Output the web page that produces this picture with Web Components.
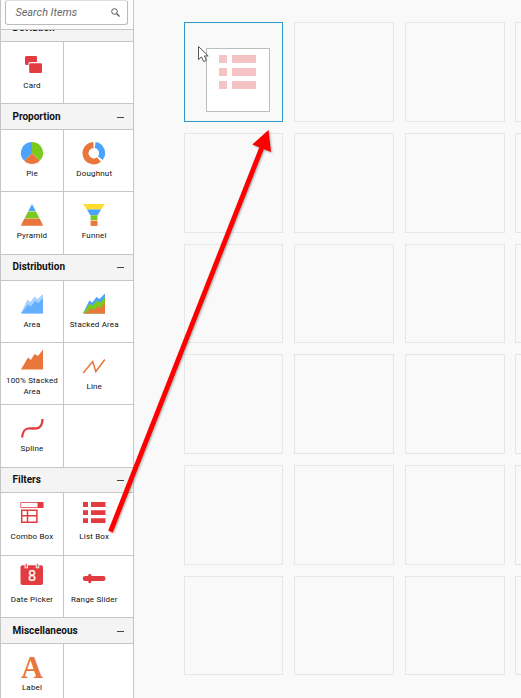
<!DOCTYPE html>
<html lang="en">
<head>
<meta charset="utf-8">
<title>Dashboard designer</title>
<style>
html,body{margin:0;height:100%;overflow:hidden}
body{font-family:Roboto,"Liberation Sans",sans-serif;background:#f9f9f9;color:#111}
</style>
</head>
<body>
<designer-app></designer-app>
<script>
const ICONS = {
  card:`<path fill="#e23c41" d="M6.500 4H16q1 0 1 1v5H10q-1.600 0-1.600 1.600V13H6.500q-1.500 0-1.500-1.500V5.300Q5 4 6.500 4z"/><rect x="9.200" y="11.200" width="12.800" height="9.800" rx="1.200" fill="#e23c41"/>`,
  pie:`<path fill="#7ac91f" d="M12 13V2A11 11 0 0 1 19.800 20.800z"/><path fill="#e9763a" d="M12 13L19.800 20.800A11 11 0 0 1 4.200 20.800z"/><path fill="#4ba3fb" d="M12 13L4.200 20.800A11 11 0 0 1 12 2z"/>`,
  doughnut:`<path fill="none" stroke="#4ba3fb" stroke-width="6" d="M13.200 5A8.200 8.200 0 0 1 18.300 18.200"/><path fill="none" stroke="#e9763a" stroke-width="6" d="M17 19.500A8.200 8.200 0 1 1 11.400 5"/>`,
  pyramid:`<path fill="#4ba3fb" d="M12 2l3.700 7H8.300z"/><path fill="#7ac91f" d="M8.100 9.400h7.800L19.600 16.400H4.400z"/><path fill="#e9763a" d="M4.200 16.800h15.600L23.200 23.800H.8z"/>`,
  funnel:`<path fill="#ffdc2e" d="M1.200 2h21.600L19.200 7.500H4.800z"/><path fill="#4ba3fb" d="M4.900 7.600h14.200L15.700 13.200H8.300z"/><path fill="#7ac91f" d="M8.600 13.300h6.900v4.700H8.600z"/><path fill="#e9763a" d="M8.600 18.600h6.900v5.300H8.600z"/>`,
  area:`<path fill="#a9d3ff" d="M1 22.500L7.300 8.500 10.300 11 14.500 5.500 17.500 8 23 3v19.500z"/><path fill="#63aeff" d="M1 22.500L8 13.500 11 15.500 15 10 18.500 12 23 7v15.500z"/>`,
  stacked:`<path fill="#4ba3fb" d="M1 22.500L7.300 9.500 10.300 11.500 14.500 6 17.500 8 23 2.500v20z"/><path fill="#7ac91f" d="M1 22.500L7.500 12.500 10.500 14.500 15 9.500 18 11.500 23 6.500v16z"/><path fill="#e9763a" d="M2.500 22.500L9 17.500 12 19 15.500 15.500 18.500 17 23 12v10.500z"/>`,
  full:`<path fill="#e9763a" d="M1 22.500L8 10.500 10.800 13 14.500 7 18 9 23 2.500v20z"/>`,
  line:`<path fill="none" stroke="#e9763a" stroke-width="1.500" d="M1.200 20L10.700 8.500 13.800 18.500 22.800 6.500"/>`,
  spline:`<path fill="none" stroke="#e23c41" stroke-width="2.300" d="M2 22.500C3 15 5.500 13 10 13.300 17 14 22.300 14 22.500 4"/>`,
  combo:`<path fill="none" stroke="#e8676b" stroke-width="1" d="M.7-.5h22v5H.7z"/><path fill="#e23c41" d="M17.500-1h6v6h-6z"/><path fill="none" stroke="#e23c41" stroke-width="1.500" d="M1.700 7.300h15.200v11.900H1.700zM7.500 7v12M1.500 12.800h15.500"/>`,
  list:`<path fill="#e23c41" d="M1-1h5v5H1zM9-1h14.500v5H9zM1 7.200h5v4.800H1zM9 7.200h14.500v4.800H9zM1 15.200h5v4.800H1zM9 15.200h14.500v4.800H9z"/>`,
  date:`<rect x=".5" y="-.8" width="22.500" height="19.800" rx="2" fill="#e23c41"/><path fill="none" stroke="#fff" stroke-width="3.400" d="M6.300-2.500v4.800M17.500-2.500v4.800"/><path fill="none" stroke="#e8676b" stroke-width="1.600" d="M6.300-2.200v3.700M17.500-2.200v3.700"/><text x="12" y="14.500" text-anchor="middle" font-size="14.500" fill="#fff" stroke="#fff" stroke-width=".2">8</text>`,
  range:`<rect x=".8" y="10" width="22.700" height="5" rx="2.300" fill="#e23c41"/><rect x="6.300" y="7.800" width="3" height="9.500" rx="1.500" fill="#e23c41"/>`,
  label:`<text x="12" y="23.500" text-anchor="middle" font-family="Liberation Serif,serif" font-size="30.500" font-weight="700" fill="#e9763a">A</text>`
};

function define(name, render){
  customElements.define(name, class extends HTMLElement{
    connectedCallback(){
      if(!this.shadowRoot) this.attachShadow({mode:'open'}).innerHTML = render(this);
    }
  });
}

define('search-box', () => `<style>
:host{display:block;box-sizing:border-box;height:30px;padding:0 5px;background:#fcfcfc;border-bottom:1px solid #c6c6c6}
div{box-sizing:border-box;display:flex;align-items:center;justify-content:space-between;height:25px;margin-left:-1px;padding:0 7px 1px 9.500px;background:#fff;border:1px solid #bbb;border-top-color:#ddd;border-radius:3px}
span{font-size:10.900px;font-style:italic;color:#686868}
svg{width:9px;height:9px}
</style><div><span>Search Items</span><svg viewBox="0 0 9 9" fill="none" stroke="#555"><circle cx="3.500" cy="3.500" r="2.800" stroke-width="1"/><path d="M5.500 5.500L8.500 8.500" stroke-width="1.300"/></svg></div>`);

define('group-header', el => `<style>
:host{display:flex;box-sizing:border-box;height:${el.getAttribute('h')}px;align-items:flex-end;justify-content:space-between;padding:0 9px 0 11.500px;background:#f4f4f4;border-bottom:1px solid #c6c6c6;overflow:hidden}
span{font-size:10px;font-weight:700;line-height:12px;margin-bottom:${el.getAttribute('text-gap')||6.5}px;white-space:nowrap}
i{width:7px;height:1px;background:#444;margin-bottom:${el.hasAttribute('text-gap')?12:11}px;box-shadow:0 0 .5px #666}
</style><span><slot></slot></span>${el.hasAttribute('plain')?'':'<i></i>'}`);

define('item-row', el => `<style>
:host{display:flex;box-sizing:border-box;height:${el.getAttribute('h')}px;background:#fff;border-bottom:1px solid #c6c6c6}
::slotted(:first-child){border-right:1px solid #c6c6c6}
::slotted(:nth-child(2)){width:60.500px}
</style><slot></slot>`);

define('chart-item', el => `<style>
:host{display:flex;flex:none;flex-direction:column;align-items:center;justify-content:center;gap:2px;width:62px;padding-bottom:3px;box-sizing:content-box;height:calc(100% - 3px)}
svg{display:block;flex:none;width:24px;height:26px;overflow:visible}
span{font-size:8px;line-height:11px;letter-spacing:.17px;text-align:center;color:#111;width:60px}
</style>${el.getAttribute('icon')?`<svg viewBox="0 0 24 26">${ICONS[el.getAttribute('icon')]}</svg><span><slot></slot></span>`:''}`);

define('item-panel', () => `<style>
:host{display:block;box-sizing:border-box;flex:none;width:134px;height:698px;overflow:hidden;background:#fff;border:solid #c6c6c6;border-width:0 1px}
</style>
<search-box></search-box>
<group-header h="12" text-gap="7" plain>Deviation</group-header>
<item-row h="62"><chart-item icon="card">Card</chart-item></item-row>
<group-header h="26">Proportion</group-header>
<item-row h="62"><chart-item icon="pie">Pie</chart-item><chart-item icon="doughnut">Doughnut</chart-item></item-row>
<item-row h="63"><chart-item icon="pyramid">Pyramid</chart-item><chart-item icon="funnel">Funnel</chart-item></item-row>
<group-header h="26" text-gap="7">Distribution</group-header>
<item-row h="62"><chart-item icon="area">Area</chart-item><chart-item icon="stacked">Stacked Area</chart-item></item-row>
<item-row h="62"><chart-item icon="full">100% Stacked Area</chart-item><chart-item icon="line">Line</chart-item></item-row>
<item-row h="63"><chart-item icon="spline">Spline</chart-item></item-row>
<group-header h="25">Filters</group-header>
<item-row h="63"><chart-item icon="combo">Combo Box</chart-item><chart-item icon="list">List Box</chart-item></item-row>
<item-row h="62"><chart-item icon="date">Date Picker</chart-item><chart-item icon="range">Range Slider</chart-item></item-row>
<group-header h="26">Miscellaneous</group-header>
<item-row h="62"><chart-item icon="label">Label</chart-item></item-row>`);

define('design-canvas', () => `<style>
:host{display:grid;box-sizing:border-box;flex:1;height:698px;padding:22.400px 0 0 49.700px;grid-template-columns:repeat(4,99.700px);grid-template-rows:repeat(6,99.600px);gap:11.100px 10.900px;overflow:hidden;background:#f9f9f9}
div{border:1px solid #e6e6e6}
div.active{border-color:#2b9bc9}
</style><div class="active"></div>${'<div></div>'.repeat(23)}`);

define('drag-ghost', () => `<style>
:host{display:block;position:absolute;left:206px;top:48px;box-sizing:border-box;width:64px;height:64px;background:#fff;border:1px solid #bdbdbd}
svg{display:block}
</style><svg width="62" height="62"><path fill="#f6c3c5" d="M12 6h8v8h-8zM25 6h24v8H25zM12 19h8v8h-8zM25 19h24v8H25zM12 32h8v8h-8zM25 32h24v8H25z"/></svg>`);

define('drag-overlay', () => `<style>
:host{display:block;position:absolute;inset:0;pointer-events:none}
svg{display:block}
.arrow{filter:drop-shadow(1px 1px 1px #0005)}
</style><svg width="521" height="698">
<path d="M198.500 46.500v13.200l3-2.800 2.200 4.700 2.700-1.200-2-4.500h3.800z" fill="#fff" stroke="#555"/>
<g class="arrow" fill="#fe0000"><path d="M110.500 531.500L262 147" stroke="#fe0000" stroke-width="4.800"/><path d="M268.500 130L252.300 144.500L271 152z"/></g>
</svg>`);

define('designer-app', () => `<style>
:host{display:flex;position:relative;width:521px;height:698px;overflow:hidden}
</style><item-panel></item-panel><design-canvas></design-canvas><drag-ghost></drag-ghost><drag-overlay></drag-overlay>`);
</script>
</body>
</html>
